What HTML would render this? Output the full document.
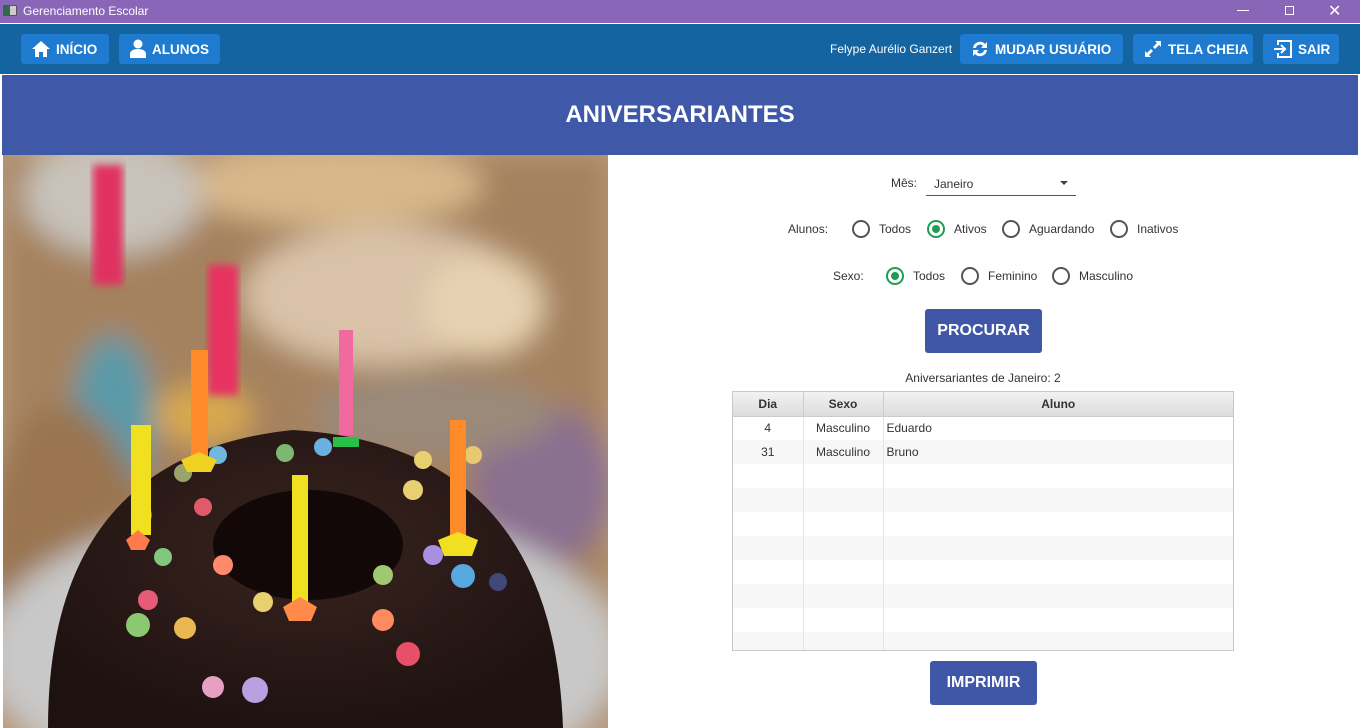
<!DOCTYPE html>
<html style="overflow:hidden;width:1360px;height:728px"><head><meta charset="utf-8">
<style>
*{margin:0;padding:0;box-sizing:border-box}
body{width:1360px;height:728px;overflow:hidden;background:#fff;font-family:"Liberation Sans",sans-serif;position:relative;color:#333}
.abs{position:absolute}
#tb{left:0;top:0;width:1360px;height:23px;background:#8a66b8;color:#fff;font-size:12px}
#nav{left:0;top:24px;width:1360px;height:50px;background:#1464a2}
.btn{position:absolute;top:10px;height:30px;background:#1e7bd0;border-radius:3px;color:#fff;font-weight:bold;font-size:13.5px;display:flex;align-items:center;padding-left:10px;white-space:nowrap;overflow:hidden}
.btn svg{margin-right:5px;flex:none}
#hdr{left:2px;top:75px;width:1356px;height:80px;background:#3f58a8;color:#fff;font-weight:bold;font-size:24px;text-align:center;line-height:80px}
.lbl{font-size:12px;color:#333;position:absolute}
.rad{position:absolute;width:18px;height:18px;border:2px solid #555;border-radius:50%}
.rad.on{border-color:#1f9d55}
.rad.on::after{content:"";position:absolute;left:3px;top:3px;width:8px;height:8px;border-radius:50%;background:#1f9d55}
.pb{position:absolute;background:#3f57a6;color:#fff;font-weight:bold;font-size:16px;border-radius:3px;text-align:center;line-height:44px}
table{border-collapse:collapse;font-size:12px}
</style></head><body>
<div id="tb" class="abs">
 <div class="abs" style="left:3px;top:5px;width:14px;height:11px;background:#ccc;border:1px solid #555"><div style="width:6px;height:9px;background:#2d6a4f"></div></div>
 <div class="abs" style="left:23px;top:4px">Gerenciamento Escolar</div>
 <div class="abs" style="left:1237px;top:10px;width:12px;height:1px;background:#fff"></div>
 <div class="abs" style="left:1285px;top:6px;width:9px;height:9px;border:1px solid #fff"></div>
 <div class="abs" style="left:1328px;top:1px;font-size:16px">✕</div>
</div>
<div class="abs" style="left:0;top:23px;width:1360px;height:1px;background:#fff"></div>
<div id="nav" class="abs">
 <div class="btn" style="left:21px;width:88px"><svg width="20" height="18" viewBox="0 0 20 18"><path d="M10 1L1 9h3v8h4v-5h4v5h4V9h3z" fill="#fff"/></svg>INÍCIO</div>
 <div class="btn" style="left:119px;width:101px"><svg width="18" height="20" viewBox="0 0 18 20"><circle cx="9" cy="5" r="4.5" fill="#fff"/><path d="M1 19v-4c0-3 3-5 8-5s8 2 8 5v4z" fill="#fff"/></svg>ALUNOS</div>
 <div class="abs" style="left:830px;top:18px;font-size:12px;color:#fff">Felype Aurélio Ganzert</div>
 <div class="btn" style="left:960px;width:163px"><svg width="20" height="20" viewBox="0 0 20 20"><path d="M3 9a7 7 0 0 1 12-4l2-2v6h-6l2-2a4 4 0 0 0-7 2z M17 11a7 7 0 0 1-12 4l-2 2v-6h6l-2 2a4 4 0 0 0 7-2z" fill="#fff"/></svg>MUDAR USUÁRIO</div>
 <div class="btn" style="left:1133px;width:120px"><svg width="20" height="20" viewBox="0 0 20 20"><path d="M12 2h6v6l-2-2-4 4-2-2 4-4z M8 18H2v-6l2 2 4-4 2 2-4 4z" fill="#fff"/></svg>TELA CHEIA</div>
 <div class="btn" style="left:1263px;width:76px"><svg width="20" height="20" viewBox="0 0 20 20" fill="none" stroke="#fff" stroke-width="2"><path d="M5 6V2h13v16H5v-4M1 10h11M8 6l4 4-4 4"/></svg>SAIR</div>
</div>
<div class="abs" style="left:0;top:74px;width:1360px;height:1px;background:#fff"></div>
<div id="hdr" class="abs">ANIVERSARIANTES</div>

<svg class="abs" style="left:3px;top:155px" width="605" height="573" viewBox="0 0 605 573">
<defs>
<filter id="b"><feGaussianBlur stdDeviation="14"/></filter>
<filter id="b2"><feGaussianBlur stdDeviation="4"/></filter>
<radialGradient id="ck" cx="0.5" cy="0.4" r="0.6"><stop offset="0" stop-color="#3a2420"/><stop offset="1" stop-color="#1e1210"/></radialGradient>
</defs>
<rect width="605" height="573" fill="#b89a7a"/>
<g filter="url(#b)">
<rect x="0" y="0" width="605" height="573" fill="#a5825e"/>
<ellipse cx="330" cy="30" rx="150" ry="40" fill="#d8b88a"/>
<ellipse cx="110" cy="40" rx="90" ry="60" fill="#c8c2ba"/>
<ellipse cx="380" cy="140" rx="140" ry="70" fill="#d9c2a8"/>
<ellipse cx="480" cy="150" rx="60" ry="50" fill="#e6d2b0"/>
<ellipse cx="540" cy="330" rx="70" ry="80" fill="#8a7090"/>
<ellipse cx="430" cy="260" rx="120" ry="40" fill="#9a8a7a"/>
<ellipse cx="110" cy="260" rx="40" ry="80" fill="#5a9aa8"/>
<ellipse cx="200" cy="260" rx="50" ry="30" fill="#d8a850"/>
<ellipse cx="60" cy="400" rx="80" ry="150" fill="#9a7450"/>
<ellipse cx="300" cy="500" rx="320" ry="150" fill="#c8c8c8"/>
</g>
<rect x="90" y="10" width="30" height="120" fill="#e03060" filter="url(#b2)"/>
<rect x="205" y="110" width="30" height="130" fill="#e83060" filter="url(#b2)"/>
<path d="M45 573 Q45 300 290 275 Q550 290 560 573Z" fill="url(#ck)"/>
<ellipse cx="305" cy="390" rx="95" ry="55" fill="#120807"/>
<g>
<circle cx="140" cy="360" r="9" fill="#e24a6a"/><circle cx="180" cy="318" r="9" fill="#9aa36a"/><circle cx="200" cy="352" r="9" fill="#e05a6a"/>
<circle cx="215" cy="300" r="9" fill="#70b8e0"/><circle cx="282" cy="298" r="9" fill="#7cb870"/><circle cx="320" cy="292" r="9" fill="#6ab0e0"/>
<circle cx="135" cy="470" r="12" fill="#8cc870"/><circle cx="182" cy="473" r="11" fill="#eab850"/><circle cx="210" cy="532" r="11" fill="#e8a0c0"/>
<circle cx="145" cy="445" r="10" fill="#e85a7a"/><circle cx="160" cy="402" r="9" fill="#80c880"/><circle cx="252" cy="535" r="13" fill="#b9a0e0"/>
<circle cx="380" cy="420" r="10" fill="#9fc870"/><circle cx="380" cy="465" r="11" fill="#ff8a60"/><circle cx="405" cy="499" r="12" fill="#e8506a"/>
<circle cx="460" cy="421" r="12" fill="#58a8e0"/><circle cx="430" cy="400" r="10" fill="#a890e0"/><circle cx="495" cy="427" r="9" fill="#404878"/>
<circle cx="420" cy="305" r="9" fill="#e8d070"/><circle cx="470" cy="300" r="9" fill="#e8c870"/><circle cx="260" cy="447" r="10" fill="#e8d070"/>
<circle cx="220" cy="410" r="10" fill="#ff8a6a"/><circle cx="410" cy="335" r="10" fill="#e8d070"/>
</g>
<rect x="128" y="270" width="20" height="110" fill="#f0e020"/><path d="M123 385 l12-10 12 10 -5 10 -14 0z" fill="#ff7a4a"/>
<rect x="188" y="195" width="17" height="110" fill="#ff8a28"/><path d="M178 305 l18-8 18 8 -6 12 -24 0z" fill="#f0d020"/>
<rect x="336" y="175" width="14" height="105" fill="#f06aa0"/><path d="M330 282 h26 v10 h-26z" fill="#28c048"/>
<rect x="289" y="320" width="16" height="130" fill="#f0e020"/><path d="M280 452 l17-10 17 10 -6 14 -22 0z" fill="#ff8a4a"/>
<rect x="447" y="265" width="16" height="118" fill="#ff8a28"/><path d="M435 385 l20-8 20 8 -6 16 -28 0z" fill="#f0e020"/>
</svg>

<div class="lbl" style="left:891px;top:176px">Mês:</div>
<div class="lbl" style="left:934px;top:177px">Janeiro</div>
<div class="abs" style="left:1060px;top:181px;width:0;height:0;border-left:4px solid transparent;border-right:4px solid transparent;border-top:4px solid #444"></div>
<div class="abs" style="left:926px;top:195px;width:150px;height:1px;background:#555"></div>

<div class="lbl" style="left:788px;top:222px">Alunos:</div>
<div class="rad" style="left:852px;top:220px"></div><div class="lbl" style="left:879px;top:222px">Todos</div>
<div class="rad on" style="left:927px;top:220px"></div><div class="lbl" style="left:954px;top:222px">Ativos</div>
<div class="rad" style="left:1002px;top:220px"></div><div class="lbl" style="left:1029px;top:222px">Aguardando</div>
<div class="rad" style="left:1110px;top:220px"></div><div class="lbl" style="left:1137px;top:222px">Inativos</div>

<div class="lbl" style="left:833px;top:269px">Sexo:</div>
<div class="rad on" style="left:886px;top:267px"></div><div class="lbl" style="left:913px;top:269px">Todos</div>
<div class="rad" style="left:961px;top:267px"></div><div class="lbl" style="left:988px;top:269px">Feminino</div>
<div class="rad" style="left:1052px;top:267px"></div><div class="lbl" style="left:1079px;top:269px">Masculino</div>

<div class="pb" style="left:925px;top:309px;width:117px;height:44px">PROCURAR</div>
<div class="lbl" style="left:732px;width:502px;text-align:center;top:371px">Aniversariantes de Janeiro: 2</div>

<div class="abs" style="left:732px;top:391px;width:502px;height:260px;border:1px solid #c8c8c8;overflow:hidden">
<table style="width:500px">
<tr style="height:24px;background:linear-gradient(#f2f2f2,#dcdcdc);font-weight:bold;color:#333"><td style="width:70px;text-align:center;border-right:1px solid #ccc;border-bottom:1px solid #ccc">Dia</td><td style="width:80px;text-align:center;border-right:1px solid #ccc;border-bottom:1px solid #ccc">Sexo</td><td style="text-align:center;border-bottom:1px solid #ccc">Aluno</td></tr>
<tr style="height:24px;background:#fff"><td style="text-align:center;border-right:1px solid #e6e6e6">4</td><td style="text-align:center;border-right:1px solid #e6e6e6">Masculino</td><td style="padding-left:3px">Eduardo</td></tr>
<tr style="height:24px;background:#f7f7f7"><td style="text-align:center;border-right:1px solid #e6e6e6">31</td><td style="text-align:center;border-right:1px solid #e6e6e6">Masculino</td><td style="padding-left:3px">Bruno</td></tr>
<tr style="height:24px;background:#fff"><td style="border-right:1px solid #e6e6e6"></td><td style="border-right:1px solid #e6e6e6"></td><td></td></tr>
<tr style="height:24px;background:#f7f7f7"><td style="border-right:1px solid #e6e6e6"></td><td style="border-right:1px solid #e6e6e6"></td><td></td></tr>
<tr style="height:24px;background:#fff"><td style="border-right:1px solid #e6e6e6"></td><td style="border-right:1px solid #e6e6e6"></td><td></td></tr>
<tr style="height:24px;background:#f7f7f7"><td style="border-right:1px solid #e6e6e6"></td><td style="border-right:1px solid #e6e6e6"></td><td></td></tr>
<tr style="height:24px;background:#fff"><td style="border-right:1px solid #e6e6e6"></td><td style="border-right:1px solid #e6e6e6"></td><td></td></tr>
<tr style="height:24px;background:#f7f7f7"><td style="border-right:1px solid #e6e6e6"></td><td style="border-right:1px solid #e6e6e6"></td><td></td></tr>
<tr style="height:24px;background:#fff"><td style="border-right:1px solid #e6e6e6"></td><td style="border-right:1px solid #e6e6e6"></td><td></td></tr>
<tr style="height:24px;background:#f7f7f7"><td style="border-right:1px solid #e6e6e6"></td><td style="border-right:1px solid #e6e6e6"></td><td></td></tr>
</table>
</div>

<div class="pb" style="left:930px;top:661px;width:107px;height:44px">IMPRIMIR</div>
</body></html>
